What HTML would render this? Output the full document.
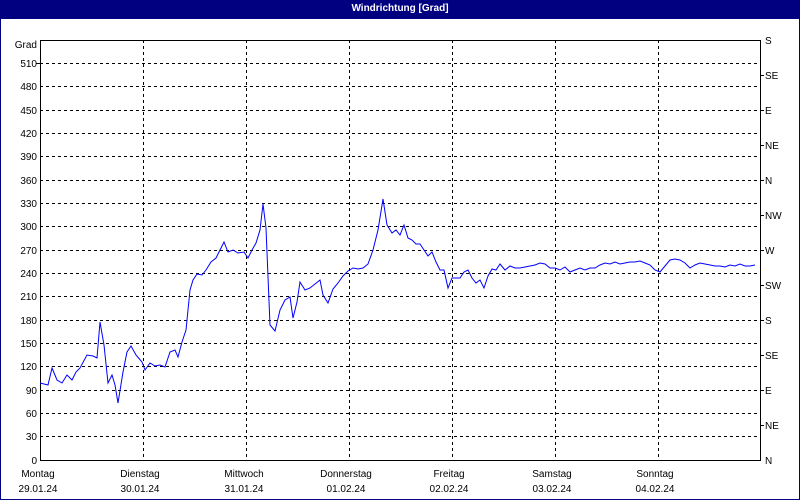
<!DOCTYPE html>
<html><head><style>
body{margin:0;width:800px;height:500px;overflow:hidden;background:#fff;font-family:"Liberation Sans",sans-serif;}
.frame{position:absolute;left:0;top:0;width:798px;height:498px;border:1px solid #000080;}
.title{position:absolute;left:0;top:0;width:800px;height:19px;background:#000080;color:#fff;font-weight:bold;font-size:10px;text-align:center;line-height:18px;}
svg{position:absolute;left:0;top:0;}
text{font-family:"Liberation Sans",sans-serif;font-size:10px;fill:#000;}
</style></head><body>
<div class="frame"></div>
<div class="title">Windrichtung [Grad]</div>
<svg width="800" height="500">
<g stroke="#000" stroke-dasharray="3,3" stroke-width="1">
<line x1="40" x2="760" y1="63.5" y2="63.5"/><line x1="40" x2="760" y1="86.5" y2="86.5"/><line x1="40" x2="760" y1="110.5" y2="110.5"/><line x1="40" x2="760" y1="133.5" y2="133.5"/><line x1="40" x2="760" y1="156.5" y2="156.5"/><line x1="40" x2="760" y1="180.5" y2="180.5"/><line x1="40" x2="760" y1="203.5" y2="203.5"/><line x1="40" x2="760" y1="226.5" y2="226.5"/><line x1="40" x2="760" y1="250.5" y2="250.5"/><line x1="40" x2="760" y1="273.5" y2="273.5"/><line x1="40" x2="760" y1="296.5" y2="296.5"/><line x1="40" x2="760" y1="320.5" y2="320.5"/><line x1="40" x2="760" y1="343.5" y2="343.5"/><line x1="40" x2="760" y1="366.5" y2="366.5"/><line x1="40" x2="760" y1="390.5" y2="390.5"/><line x1="40" x2="760" y1="413.5" y2="413.5"/><line x1="40" x2="760" y1="436.5" y2="436.5"/>
<line x1="143.5" x2="143.5" y1="40" y2="460"/><line x1="246.5" x2="246.5" y1="40" y2="460"/><line x1="349.5" x2="349.5" y1="40" y2="460"/><line x1="452.5" x2="452.5" y1="40" y2="460"/><line x1="555.5" x2="555.5" y1="40" y2="460"/><line x1="658.5" x2="658.5" y1="40" y2="460"/>
</g>
<path d="M40.5 40.5H760.5V460.5H40.5Z" fill="none" stroke="#000"/>
<g stroke="#000"><line x1="36" x2="40" y1="63.5" y2="63.5"/><line x1="760" x2="764" y1="75.5" y2="75.5"/><line x1="760" x2="764" y1="110.5" y2="110.5"/><line x1="760" x2="764" y1="145.5" y2="145.5"/><line x1="760" x2="764" y1="180.5" y2="180.5"/><line x1="760" x2="764" y1="215.5" y2="215.5"/><line x1="760" x2="764" y1="250.5" y2="250.5"/><line x1="760" x2="764" y1="285.5" y2="285.5"/><line x1="760" x2="764" y1="320.5" y2="320.5"/><line x1="760" x2="764" y1="355.5" y2="355.5"/><line x1="760" x2="764" y1="390.5" y2="390.5"/><line x1="760" x2="764" y1="425.5" y2="425.5"/></g>
<g text-anchor="end">
<text x="37" y="48">Grad</text><text x="37" y="67">510</text><text x="37" y="90">480</text><text x="37" y="114">450</text><text x="37" y="137">420</text><text x="37" y="160">390</text><text x="37" y="184">360</text><text x="37" y="207">330</text><text x="37" y="230">300</text><text x="37" y="254">270</text><text x="37" y="277">240</text><text x="37" y="300">210</text><text x="37" y="324">180</text><text x="37" y="347">150</text><text x="37" y="370">120</text><text x="37" y="394">90</text><text x="37" y="417">60</text><text x="37" y="440">30</text><text x="37" y="464">0</text>
</g>
<g>
<text x="765" y="44">S</text><text x="765" y="79">SE</text><text x="765" y="114">E</text><text x="765" y="149">NE</text><text x="765" y="184">N</text><text x="765" y="219">NW</text><text x="765" y="254">W</text><text x="765" y="289">SW</text><text x="765" y="324">S</text><text x="765" y="359">SE</text><text x="765" y="394">E</text><text x="765" y="429">NE</text><text x="765" y="464">N</text>
</g>
<g text-anchor="middle">
<text x="38" y="477">Montag</text><text x="38" y="492">29.01.24</text>
<text x="140" y="477">Dienstag</text><text x="140" y="492">30.01.24</text>
<text x="244" y="477">Mittwoch</text><text x="244" y="492">31.01.24</text>
<text x="346" y="477">Donnerstag</text><text x="346" y="492">01.02.24</text>
<text x="449" y="477">Freitag</text><text x="449" y="492">02.02.24</text>
<text x="552" y="477">Samstag</text><text x="552" y="492">03.02.24</text>
<text x="655" y="477">Sonntag</text><text x="655" y="492">04.02.24</text>
</g>
<polyline fill="none" stroke="#0000ff" stroke-width="1" points="40,383 48,385 52,368 57,380 62,383 67,375 72,380 76,372 80,368 87,355 93,356 97,358 100,322 104,345 108,383 112,375 115,385 118,403 123,372 127,352 131,346 136,355 142,362 145,370 150,363 155,366 160,365 165,367 170,352 175,350 178,357 182,342 186,330 190,290 193,280 197,274 202,275 206,270 211,262 216,258 220,250 224,242 228,252 233,250 238,253 244,252 248,258 252,250 256,243 260,230 263,204 266,228 270,325 275,331 280,310 285,300 290,297 293,318 297,302 300,282 305,290 310,288 315,284 320,280 323,295 328,303 333,289 338,283 343,276 348,271 353,268 358,269 363,268 368,264 373,250 378,230 383,199 387,225 392,233 396,230 400,235 404,225 408,238 412,240 416,244 420,244 424,250 428,256 432,252 436,262 440,270 444,270 448,288 452,278 456,278 460,278 464,272 468,270 472,278 476,283 480,280 484,288 488,276 492,269 496,270 500,264 505,270 510,266 515,268 520,268 525,267 530,266 535,265 540,263 545,264 550,268 555,268 560,270 565,267 570,272 575,270 580,268 585,270 590,268 595,268 600,265 605,263 610,264 615,262 620,264 625,263 630,262 635,262 640,261 645,263 650,265 655,270 660,272 665,266 670,260 675,259 680,260 685,263 690,268 695,265 700,263 705,264 710,265 715,266 720,266 725,267 730,265 735,266 740,264 745,266 750,266 755,265"/>
</svg>
</body></html>
